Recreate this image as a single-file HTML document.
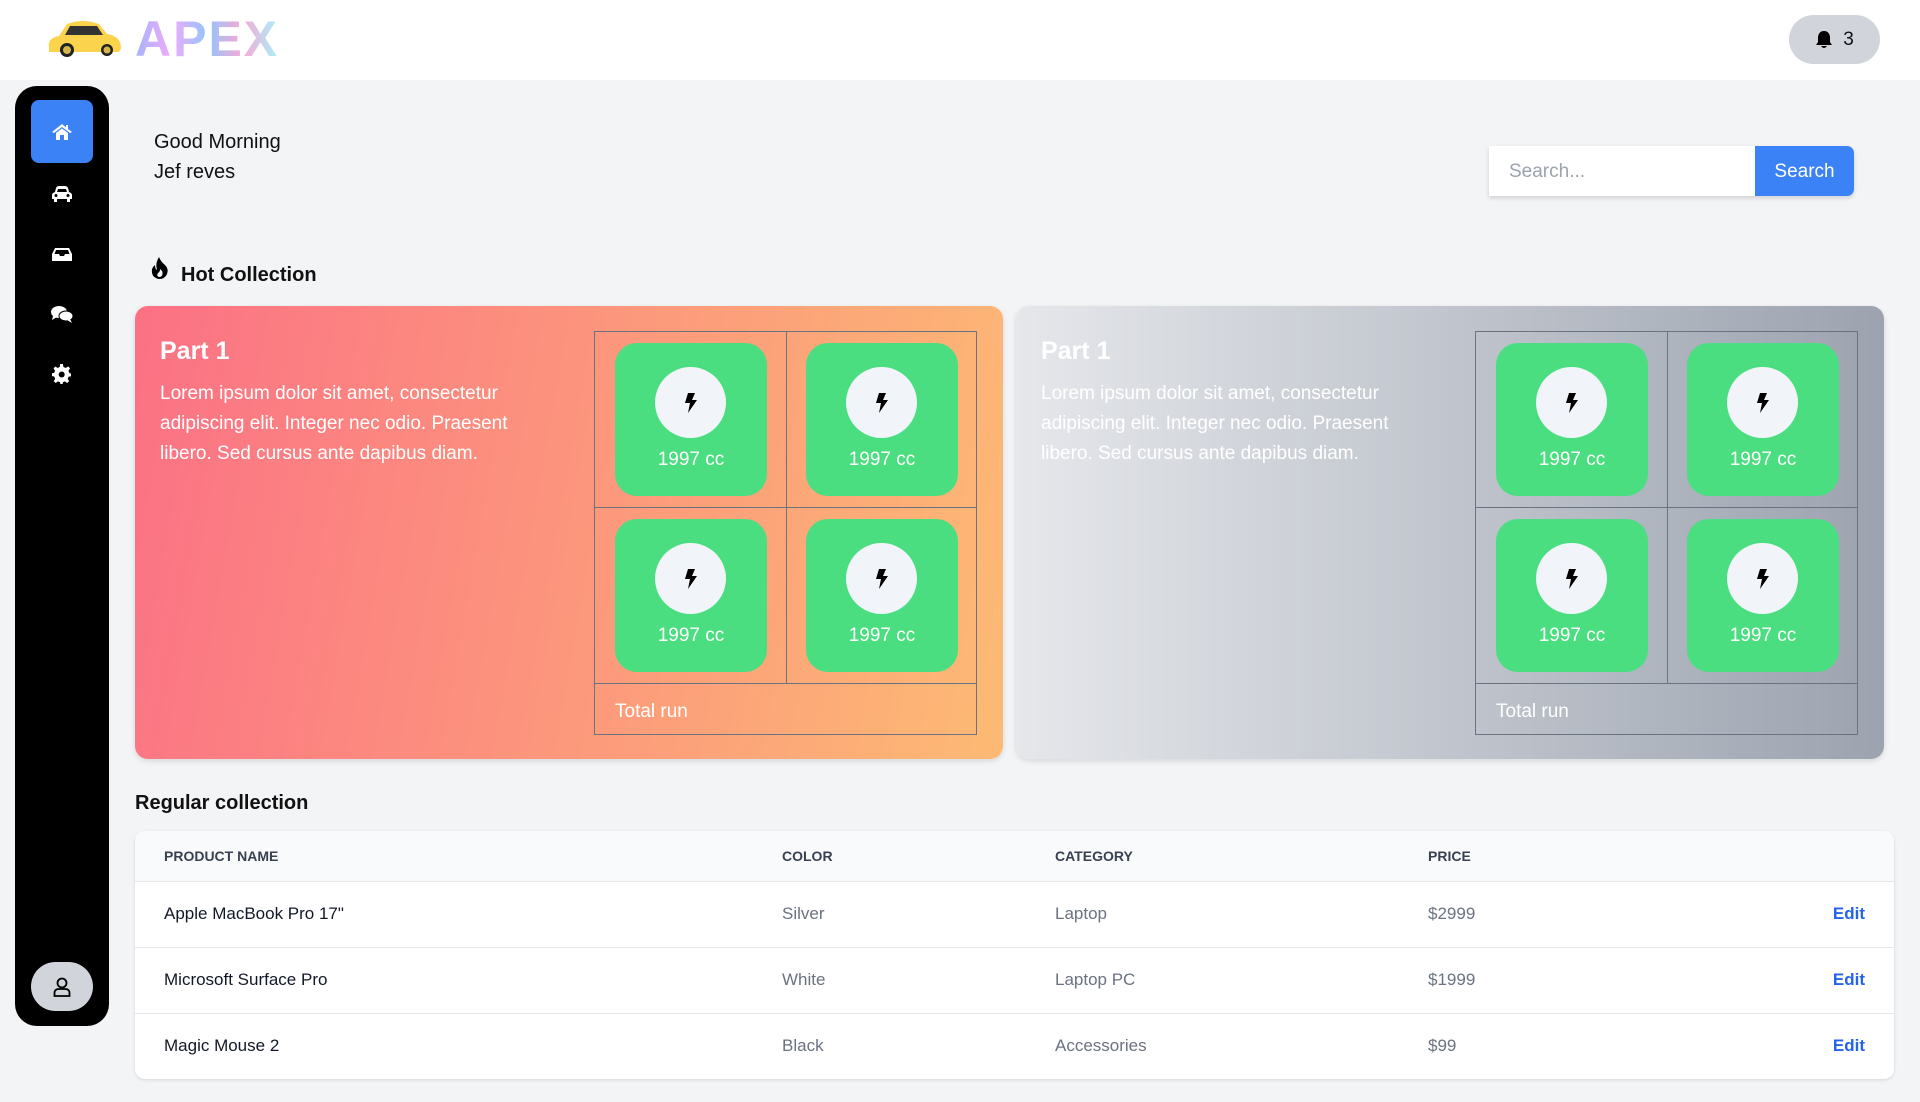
<!DOCTYPE html>
<html><head><meta charset="utf-8"><style>
*{box-sizing:border-box;margin:0;padding:0}
body{width:1920px;height:1102px;background:#f3f4f6;font-family:"Liberation Sans",sans-serif;position:relative;overflow:hidden;color:#111}
.abs{position:absolute}
header{position:absolute;left:0;top:0;width:1920px;height:80px;background:#fff}
.side{left:15px;top:86px;width:94px;height:940px;background:#000;border-radius:22px}
.ic{position:absolute;left:31px;width:62px;height:62px;display:flex;align-items:center;justify-content:center}
.card{top:306px;width:868px;height:453px;border-radius:13px;box-shadow:0 2px 6px rgba(0,0,0,.12)}
.card h2{position:absolute;left:25px;top:31px;font-size:25px;color:#fff;font-weight:bold}
.card p{position:absolute;left:25px;top:73px;width:400px;font-size:19px;line-height:30px;color:#fff}
.grid{position:absolute;left:459px;top:25px;width:383px;height:404px;border:1px solid #6b7280}
.vl{position:absolute;left:191px;top:0;width:1px;height:351px;background:#6b7280}
.hl{position:absolute;left:0;width:100%;height:1px;background:#6b7280}
.tile{position:absolute;width:152px;height:153px;background:#4ade80;border-radius:22px}
.tile .c{position:absolute;left:40px;top:24px;width:71px;height:71px;border-radius:50%;background:#f1f5f9;display:flex;align-items:center;justify-content:center}
.tile span{position:absolute;left:0;width:100%;top:106px;text-align:center;color:#fff;font-size:19px}
.tr{position:absolute;left:20px;top:369px;color:#fff;font-size:19px}
table{border-collapse:collapse;width:100%}
.tbl{left:135px;top:831px;width:1759px;background:#fff;border-radius:10px;overflow:hidden;box-shadow:0 1px 3px rgba(0,0,0,.12)}
th{height:50px;background:#f9fafb;text-align:left;font-size:14px;color:#374151;font-weight:bold;padding-left:29px}
td{height:66px;font-size:17px;color:#6b7280;padding-left:29px;border-top:1px solid #e5e7eb}
td.n{color:#111827}
td.e{text-align:right;padding-right:29px;color:#2563eb;font-weight:bold}
</style></head><body>
<header>
<svg class="abs" style="left:45px;top:18px" width="78" height="42" viewBox="0 0 78 42"><path d="M4 30 Q2 20 14 18 L22 6 Q38 0 54 6 L62 16 Q76 18 76 30 L74 34 H4Z" fill="#fcd34d"/><path d="M25 8 H52 L58 17 H20Z" fill="#333"/><circle cx="22" cy="32" r="7" fill="#222"/><circle cx="22" cy="32" r="4" fill="#d4b64a"/><circle cx="62" cy="32" r="6" fill="#222"/><circle cx="62" cy="32" r="3.5" fill="#d4b64a"/></svg>
<div class="abs" style="left:135px;top:10px;font-size:50px;font-weight:bold;letter-spacing:2px;background:linear-gradient(90deg,#a5b4fc,#f0abfc,#93c5fd,#f9a8d4,#a5f3fc);-webkit-background-clip:text;color:transparent">APEX</div>
<div class="abs" style="left:1789px;top:15px;width:91px;height:49px;border-radius:25px;background:#d1d5db;display:flex;align-items:center;justify-content:center;gap:10px;font-size:19px">
<svg width="18" height="20" viewBox="0 0 18 20"><path d="M9 1 C5 1 3 4 3 8 V12 L1 15 H17 L15 12 V8 C15 4 13 1 9 1Z M6 16 Q9 20 12 16Z" fill="#000"/></svg><span>3</span></div>
</header>
<div class="abs side"></div>
<div class="ic" style="top:100px;height:63px;background:#3b82f6;border-radius:8px"><svg width="22" height="18" viewBox="0 0 22 18"><path d="M11 1 L1 9 L3 10 L11 4 L19 10 L21 9 L17 6 V2 H15 V4.5Z M5 10 V17 H9 V12 H13 V17 H17 V10 L11 5.5Z" fill="#fff"/></svg></div>
<div class="ic" style="top:163px"><svg width="20" height="16" viewBox="0 0 20 16"><path d="M4 2 Q5 0 7 0 H13 Q15 0 16 2 L17 6 Q20 7 20 9 V13 H18 V16 H15 V13 H5 V16 H2 V13 H0 V9 Q0 7 3 6Z M5 6 H15 L14 3 H6Z" fill="#fff"/><circle cx="4" cy="9.5" r="1.5" fill="#000"/><circle cx="16" cy="9.5" r="1.5" fill="#000"/></svg></div>
<div class="ic" style="top:223px"><svg width="20" height="14" viewBox="0 0 20 14"><path d="M3 1 H17 L20 7 V14 H0 V7Z M4 3 L2.5 7 H7 L8 9 H12 L13 7 H17.5 L16 3Z" fill="#fff"/></svg></div>
<div class="ic" style="top:283px"><svg width="22" height="18" viewBox="0 0 22 18"><ellipse cx="8" cy="7" rx="8" ry="6" fill="#fff"/><path d="M2 11 L1 15 L6 12Z" fill="#fff"/><ellipse cx="15" cy="11" rx="7" ry="5" fill="#fff" stroke="#000" stroke-width="1"/><path d="M19 14 L21 18 L16 15Z" fill="#fff"/></svg></div>
<div class="ic" style="top:343px"><svg width="20" height="20" viewBox="0 0 20 20"><path d="M8.5 0 H11.5 L12 3 L14.5 4.2 L17 2.5 L19 4.6 L17.3 7.1 L18.3 9.6 L20 10 V13 L17.5 13.3 L16.5 15.7 L18 18 L16 20 L13.5 18.3 L11.5 19.2 L11 22 H9 L8.5 19.2 L6.2 18.3 L3.8 20 L1.8 18 L3.3 15.6 L2.4 13.2 L0 12.8 V9.8 L2.4 9.4 L3.2 7 L1.6 4.6 L3.6 2.6 L6 4.2 L8.2 3Z" fill="#fff" transform="scale(.95)"/><circle cx="9.7" cy="10.5" r="3" fill="#000"/></svg></div>
<div class="ic" style="top:962px;height:49px;background:#d1d5db;border-radius:25px"><svg width="18" height="20" viewBox="0 0 18 20"><circle cx="9" cy="6" r="4.5" fill="none" stroke="#000" stroke-width="1.8"/><path d="M1.5 19 V16 Q1.5 12 6 12 H12 Q16.5 12 16.5 16 V19Z" fill="none" stroke="#000" stroke-width="1.8"/></svg></div>

<div class="abs" style="left:154px;top:127px;font-size:20px;line-height:30px;color:#111">Good Morning<br>Jef reves</div>
<div class="abs" style="left:1489px;top:146px;width:365px;height:50px;display:flex;box-shadow:0 2px 5px rgba(0,0,0,.15);border-radius:0 7px 7px 0">
<div style="width:266px;background:#fff;color:#9ca3af;font-size:19px;padding:15px 20px">Search...</div>
<div style="width:99px;background:#3b82f6;color:#fff;font-size:19px;text-align:center;padding-top:15px;border-radius:0 7px 7px 0">Search</div></div>

<svg class="abs" style="left:151px;top:257px" width="18" height="22" viewBox="0 0 18 22"><path d="M8 0 Q10 5 14 8 Q18 12 16 17 Q14 22 8 22 Q2 21 1 16 Q0 11 4 8 Q4 12 6 13 Q4 6 8 0Z M8 20 Q11 20 11.5 17 Q12 14 9 12 Q9 15 7 16 Q5 19 8 20Z" fill="#000"/></svg>
<div class="abs" style="left:181px;top:264px;font-size:20px;font-weight:bold">Hot Collection</div>

<div class="abs card" style="left:135px;background:linear-gradient(100deg,#fb7185 0%,#fdba74 100%)">
<h2>Part 1</h2><p>Lorem ipsum dolor sit amet, consectetur adipiscing elit. Integer nec odio. Praesent libero. Sed cursus ante dapibus diam.</p>
<div class="grid"><div class="vl"></div><div class="hl" style="top:175px"></div><div class="hl" style="top:351px"></div>
<div class="tile" style="left:20px;top:11px"><div class="c"><svg width="14" height="20" viewBox="0 0 14 20"><path d="M4 0 H11 L8 7 H13 L4 20 L6 10 H1Z" fill="#000"/></svg></div><span>1997 cc</span></div>
<div class="tile" style="left:211px;top:11px"><div class="c"><svg width="14" height="20" viewBox="0 0 14 20"><path d="M4 0 H11 L8 7 H13 L4 20 L6 10 H1Z" fill="#000"/></svg></div><span>1997 cc</span></div>
<div class="tile" style="left:20px;top:187px"><div class="c"><svg width="14" height="20" viewBox="0 0 14 20"><path d="M4 0 H11 L8 7 H13 L4 20 L6 10 H1Z" fill="#000"/></svg></div><span>1997 cc</span></div>
<div class="tile" style="left:211px;top:187px"><div class="c"><svg width="14" height="20" viewBox="0 0 14 20"><path d="M4 0 H11 L8 7 H13 L4 20 L6 10 H1Z" fill="#000"/></svg></div><span>1997 cc</span></div>
<div class="tr">Total run</div></div></div>

<div class="abs card" style="left:1016px;background:linear-gradient(90deg,#e5e7eb 0%,#9ca3af 100%)">
<h2>Part 1</h2><p>Lorem ipsum dolor sit amet, consectetur adipiscing elit. Integer nec odio. Praesent libero. Sed cursus ante dapibus diam.</p>
<div class="grid" style="left:459px"><div class="vl"></div><div class="hl" style="top:175px"></div><div class="hl" style="top:351px"></div>
<div class="tile" style="left:20px;top:11px"><div class="c"><svg width="14" height="20" viewBox="0 0 14 20"><path d="M4 0 H11 L8 7 H13 L4 20 L6 10 H1Z" fill="#000"/></svg></div><span>1997 cc</span></div>
<div class="tile" style="left:211px;top:11px"><div class="c"><svg width="14" height="20" viewBox="0 0 14 20"><path d="M4 0 H11 L8 7 H13 L4 20 L6 10 H1Z" fill="#000"/></svg></div><span>1997 cc</span></div>
<div class="tile" style="left:20px;top:187px"><div class="c"><svg width="14" height="20" viewBox="0 0 14 20"><path d="M4 0 H11 L8 7 H13 L4 20 L6 10 H1Z" fill="#000"/></svg></div><span>1997 cc</span></div>
<div class="tile" style="left:211px;top:187px"><div class="c"><svg width="14" height="20" viewBox="0 0 14 20"><path d="M4 0 H11 L8 7 H13 L4 20 L6 10 H1Z" fill="#000"/></svg></div><span>1997 cc</span></div>
<div class="tr">Total run</div></div></div>

<div class="abs" style="left:135px;top:792px;font-size:20px;font-weight:bold">Regular collection</div>
<div class="abs tbl"><table>
<tr><th style="width:618px">PRODUCT NAME</th><th style="width:273px">COLOR</th><th style="width:373px">CATEGORY</th><th>PRICE</th><th></th></tr>
<tr><td class="n">Apple MacBook Pro 17"</td><td>Silver</td><td>Laptop</td><td>$2999</td><td class="e">Edit</td></tr>
<tr><td class="n">Microsoft Surface Pro</td><td>White</td><td>Laptop PC</td><td>$1999</td><td class="e">Edit</td></tr>
<tr><td class="n">Magic Mouse 2</td><td>Black</td><td>Accessories</td><td>$99</td><td class="e">Edit</td></tr>
</table></div>
</body></html>
